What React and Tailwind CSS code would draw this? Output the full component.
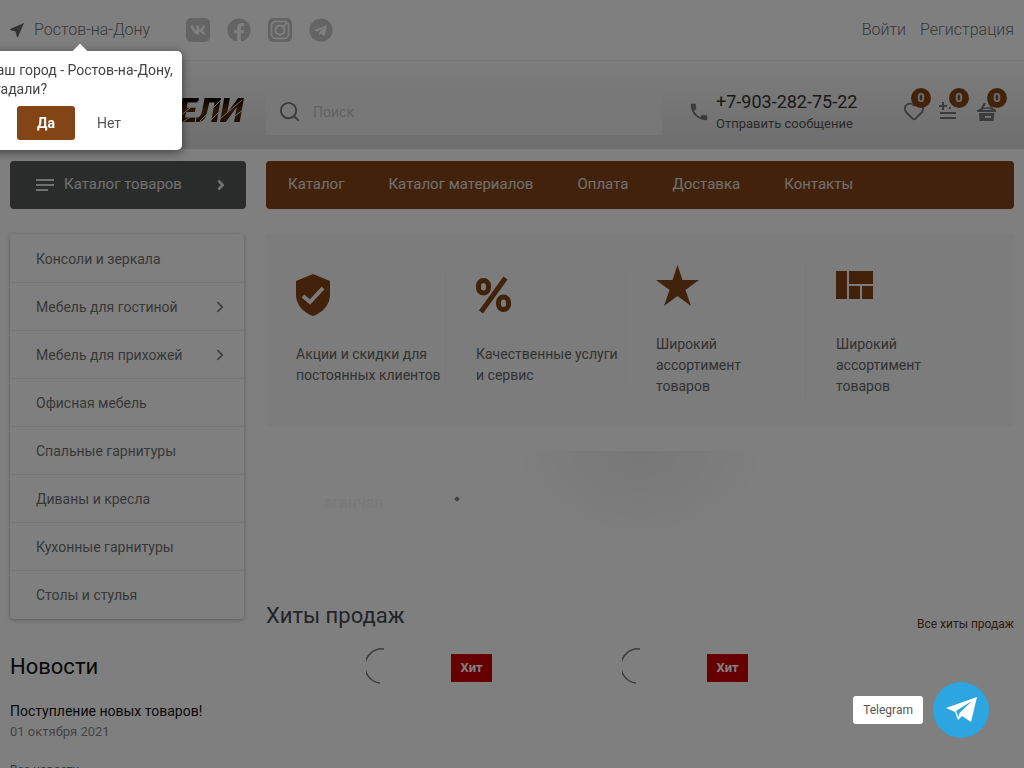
import { FaFacebook, FaTelegram, FaVk } from "react-icons/fa";
import { MdPhone } from "react-icons/md";
import { ChevronRight, Heart, Search } from "lucide-react";

const categories = [
  { name: "Консоли и зеркала" },
  { name: "Мебель для гостиной", nested: true },
  { name: "Мебель для прихожей", nested: true },
  { name: "Офисная мебель" },
  { name: "Спальные гарнитуры" },
  { name: "Диваны и кресла" },
  { name: "Кухонные гарнитуры" },
  { name: "Столы и стулья" },
];

const navLinks = ["Каталог", "Каталог материалов", "Оплата", "Доставка", "Контакты"];

const features = [
  { text: "Акции и скидки для постоянных клиентов", Icon: ShieldIcon },
  { text: "Качественные услуги и сервис", Icon: PercentIcon },
  { text: "Широкий ассортимент товаров", Icon: StarIcon, width: "max-w-[100px]" },
  { text: "Широкий ассортимент товаров", Icon: BlocksIcon, width: "max-w-[100px]" },
];

function ShieldIcon() {
  return (
    <svg className="w-[34px] h-[42px]" viewBox="0 0 34 42">
      <path fill="currentColor" d="M17 0 34 7v14c0 10-8 18-17 21C8 39 0 31 0 21V7z" />
      <path fill="none" stroke="#f5f5f5" strokeWidth="4" d="m7 22 7 6 13-14" />
    </svg>
  );
}

function PercentIcon() {
  return (
    <svg className="w-[35px] h-[42px]" viewBox="0 0 35 42" fill="none" stroke="currentColor" strokeWidth="5">
      <rect x="2.5" y="6.5" width="10" height="12.5" rx="5" />
      <rect x="22.5" y="23" width="10" height="12.5" rx="5" />
      <path d="M29.5 4 5 38" />
    </svg>
  );
}

function StarIcon() {
  return (
    <svg className="w-[43px] h-[42px]" viewBox="0 0 43 42" fill="currentColor">
      <path d="M21.500 1 26.500 16H43L29.500 26l5.500 16-13.500-10L8 42l5.500-16L0 16h16.500z" />
    </svg>
  );
}

function BlocksIcon() {
  return (
    <svg className="w-[37px] h-[42px]" viewBox="0 0 37 42" fill="currentColor">
      <path d="M0 7h11v28H0zM13 7h24v13H13zM13 22h11v13H13zM26 22h11v13H26z" />
    </svg>
  );
}

function LocationIcon() {
  return (
    <svg className="w-[14px] h-[14px] text-[#666666]" viewBox="0 0 14 14" fill="currentColor">
      <path d="M14 0 0 6v1l5.500 1.500L7 14h1z" />
    </svg>
  );
}

function VkIcon() {
  return (
    <svg className="h-6 w-6" viewBox="0 0 24 24">
      <rect width="24" height="24" rx="5" fill="currentColor" />
      <FaVk x="4" y="4" width="16" height="16" color="#ffffff" />
    </svg>
  );
}

function InstagramIcon() {
  return (
    <svg className="w-6 h-6" viewBox="0 0 24 24" fill="none" stroke="#ffffff">
      <rect width="24" height="24" rx="5" fill="currentColor" stroke="none" />
      <rect x="3.500" y="3.500" width="17" height="17" rx="4" strokeWidth="1.500" />
      <circle cx="12" cy="12" r="4.500" strokeWidth="2" />
      <path d="M15 8.500 18.500 5" strokeWidth="1.500" />
    </svg>
  );
}

function CompareIcon() {
  return (
    <svg className="w-5 h-[22px]" viewBox="0 0 20 22" fill="none" stroke="currentColor" strokeWidth="2">
      <path d="M4 2v8M0 6h8M1 13h16M1 18h16M10 8h2" />
    </svg>
  );
}

function BasketIcon() {
  return (
    <svg className="w-5 h-[22px]" viewBox="0 0 20 22" fill="none" stroke="currentColor">
      <path d="M4 10 8 3M16 10 12 3" strokeWidth="2" />
      <path d="M2 10q8-4 16 0" strokeWidth="1.500" />
      <path d="M0 10h19v2H0zM2 13h15.500L16.500 21h-14zM8 16v2h6v-2z" fill="currentColor" fillRule="evenodd" stroke="none" />
    </svg>
  );
}

function Logo() {
  return (
    <a href="#" className="relative flex h-[43px] items-center justify-end text-[34px] leading-none font-black italic">
      <span className="bg-linear-to-b from-black via-[#5a3010] to-[#2a1505] bg-clip-text pr-[3px] text-transparent">ЕЛИ</span>
      <svg className="absolute right-0 top-1 w-[68px] h-9" viewBox="0 0 68 36" fill="none" stroke="#e2e2e2" strokeWidth="1">
        <path d="M2 24 26 5M4 31l18-14M22 29 44 7M30 31l14-14M42 27 64 8M48 31l18-14" />
      </svg>
    </a>
  );
}

function CityPopover() {
  return (
    <div role="dialog" aria-label="Выбор города" className="absolute left-1/2 top-[calc(100%+9px)] z-50 w-[204px] -translate-x-1/2 rounded-[5px] bg-white pt-[10px] pb-[10px] shadow-[0_2px_10px_rgba(0,0,0,0.5)]">
      <span className="absolute left-1/2 -top-[5px] w-[11px] h-[11px] -translate-x-1/2 rotate-45 bg-white" />
      <p className="relative pl-[10px] text-sm leading-[19px] font-normal whitespace-nowrap text-[#444444]">
        Ваш город - Ростов-на-Дону,
        <br />
        угадали?
      </p>
      <div className="mt-[7px] flex justify-center text-sm">
        <button className="h-[34px] w-[58px] rounded-[3px] bg-[#844516] font-bold text-white">Да</button>
        <button className="h-[34px] px-[22px] font-normal text-[#555555]">Нет</button>
      </div>
    </div>
  );
}

function Counter({ label, children }) {
  return (
    <a href="#" aria-label={label} className="relative flex h-[34px] w-[38px] items-end pl-px text-[#777777]">
      {children}
      <span className="absolute right-[7px] top-0 flex h-5 w-5 items-center justify-center rounded-full bg-[#844516] text-[13px] font-bold text-[#dddddd]">
        0
      </span>
    </a>
  );
}

function Product() {
  return (
    <div className="relative h-[200px]">
      <svg className="mx-auto h-9 w-9" viewBox="0 0 36 36" fill="none" stroke="#777777" strokeWidth="1.500">
        <path d="M18 1A17 17 0 0 0 14 35" />
      </svg>
      <span className="absolute right-[10px] top-[6px] flex h-7 w-[41px] items-center justify-center bg-[#cc0000] text-[13px] font-bold text-white">
        Хит
      </span>
    </div>
  );
}

export default function App() {
  return (
    <div className="h-screen overflow-hidden bg-white font-[Roboto,sans-serif] text-sm text-[#707070]">
      {/* Top bar */}
      <div className="flex h-[60px] items-center justify-between px-[10px] text-base font-light">
        <div className="flex items-center gap-9">
          <div className="relative">
            <a href="#" className="flex items-center gap-[10px]">
              <LocationIcon />
              Ростов-на-Дону
            </a>
            <CityPopover />
          </div>
          <div className="flex items-center gap-[17px] text-[#c8c8c8]">
            <a href="#" aria-label="ВКонтакте"><VkIcon /></a>
            <a href="#" aria-label="Facebook"><FaFacebook className="h-6 w-6" /></a>
            <a href="#" aria-label="Instagram"><InstagramIcon /></a>
            <a href="#" aria-label="Telegram"><FaTelegram className="h-6 w-6" /></a>
          </div>
        </div>
        <div className="flex gap-[14px]">
          <a href="#">Войти</a>
          <a href="#">Регистрация</a>
        </div>
      </div>

      {/* Header */}
      <header className="grid h-[89px] grid-cols-[236px_1fr] gap-5 border-t border-[#eeeeee] bg-linear-to-b from-[#fafafa] to-[#dddddd] px-[10px] pt-[27px]">
        <Logo />
        <div className="flex items-start">
          <label className="flex h-[47px] flex-1 items-center gap-3 rounded-[3px] bg-[#f0f0f0] px-3">
            <Search className="h-[23px] w-[23px] text-[#777777]" strokeWidth={2} />
            <input type="search" placeholder="Поиск" aria-label="Поиск" className="min-w-0 flex-1 bg-transparent text-sm outline-none placeholder:text-[#c4c4c4]" />
          </label>
          <div className="ml-[26px] flex h-[47px] w-[212px] items-center gap-[6px]">
            <MdPhone className="h-[22px] w-[22px] text-[#777777]" />
            <div className="pt-[2px]">
              <a href="tel:+79032827522" className="block text-lg leading-[23px] text-[#333333]">+7-903-282-75-22</a>
              <a href="#" className="block text-[13px] leading-[22px] text-[#555555]">Отправить сообщение</a>
            </div>
          </div>
          <div className="flex">
            <Counter label="Избранное"><Heart className="ml-[2px] h-[22px] w-[22px]" /></Counter>
            <Counter label="Сравнение"><CompareIcon /></Counter>
            <Counter label="Корзина"><BasketIcon /></Counter>
          </div>
        </div>
      </header>

      <div className="grid grid-cols-[236px_1fr] gap-x-5 gap-y-[25px] px-[10px] pt-3">
        <button className="flex h-12 items-center rounded-[4px] bg-[#545857] pl-[26px] pr-[18px] text-[15px] text-[#e0e0e0]">
          <svg className="mr-[10px] h-3 w-[18px]" viewBox="0 0 18 12" stroke="currentColor" strokeWidth="2">
            <path d="M0 1h18M0 6h18M0 11h12" />
          </svg>
          Каталог товаров
          <ChevronRight className="ml-auto h-[14px] w-[14px]" strokeWidth={5} />
        </button>
        <nav className="flex h-12 items-center rounded-[4px] bg-[#844516] text-[15px] text-[#e0e0e0]">
          {navLinks.map((link) => (
            <a key={link} href="#" className="px-[22px]">{link}</a>
          ))}
        </nav>

        <aside>
          <ul className="mr-[2px] divide-y divide-[#ececec] rounded-[4px] py-px text-sm shadow-[0_1px_4px_rgba(0,0,0,0.3)]">
            {categories.map((category) => (
              <li key={category.name}>
                <a href="#" className="flex h-[47px] items-center justify-between pl-[26px] pr-[15px]">
                  {category.name}
                  {category.nested && <ChevronRight className="h-[18px] w-[18px]" />}
                </a>
              </li>
            ))}
          </ul>
          <section className="pt-[33px]">
            <h2 className="text-[22px] leading-[30px] text-[#111111]">Новости</h2>
            <a href="#" className="mt-[18px] block text-sm leading-[22px] text-[#111111]">Поступление новых товаров!</a>
            <time className="block text-[13px] leading-5 text-[#888888]" dateTime="2021-10-01">01 октября 2021</time>
            <a href="#" className="mt-[18px] block text-xs leading-5">Все новости</a>
          </section>
        </aside>

        <main>
          <ul className="grid h-[192px] grid-cols-4 items-center rounded-[4px] bg-[#f8f8f8] pr-7">
            {features.map(({ text, Icon, width }, index) => (
              <li key={index} className="border-r border-[#f0f0f0] pl-[30px] text-[#666666] last:border-0">
                <div className="mb-7 text-[#844516]"><Icon /></div>
                <p className={`leading-[21px] ${width || ""}`}>{text}</p>
              </li>
            ))}
          </ul>

          {/* Banner */}
          <div className="relative mt-[25px] h-[130px] bg-[radial-gradient(ellipse_130px_100px_at_50%_0%,#efefef,#ffffff)]">
            <span className="absolute left-[58px] top-[42px] text-base leading-5 font-bold text-[#f4f4f4]">аганчан</span>
            <span className="absolute left-[189px] top-[46px] h-1 w-1 rotate-45 bg-[#888888]" />
          </div>

          <div className="mt-5 flex items-end justify-between">
            <h2 className="text-[22px] leading-[30px] text-[#444a52]">Хиты продаж</h2>
            <a href="#" className="text-xs leading-[14px] text-[#5c3420]">Все хиты продаж</a>
          </div>
          <div className="mt-[17px] grid grid-cols-3 gap-5">
            <Product />
            <Product />
          </div>
        </main>
      </div>

      <div className="pointer-events-none fixed inset-0 z-40 bg-black/50" />

      {/* Chat widget */}
      <div className="fixed bottom-[30px] right-[35px] z-50 flex items-center gap-[10px]">
        <span className="rounded-[3px] bg-white px-[10px] text-xs leading-7 text-[#555555]">Telegram</span>
        <button aria-label="Telegram" className="flex h-14 w-14 items-center justify-center rounded-full bg-[#2ca5e0] text-white">
          <svg className="h-[26px] w-[31px]" viewBox="0 0 31 26" fill="currentColor">
            <path d="M31 0 0 11l9 4 3 8 4-4 9 6zM10 14 26 4 13.500 16l-1 4z" fillRule="evenodd" />
          </svg>
        </button>
      </div>
    </div>
  );
}
